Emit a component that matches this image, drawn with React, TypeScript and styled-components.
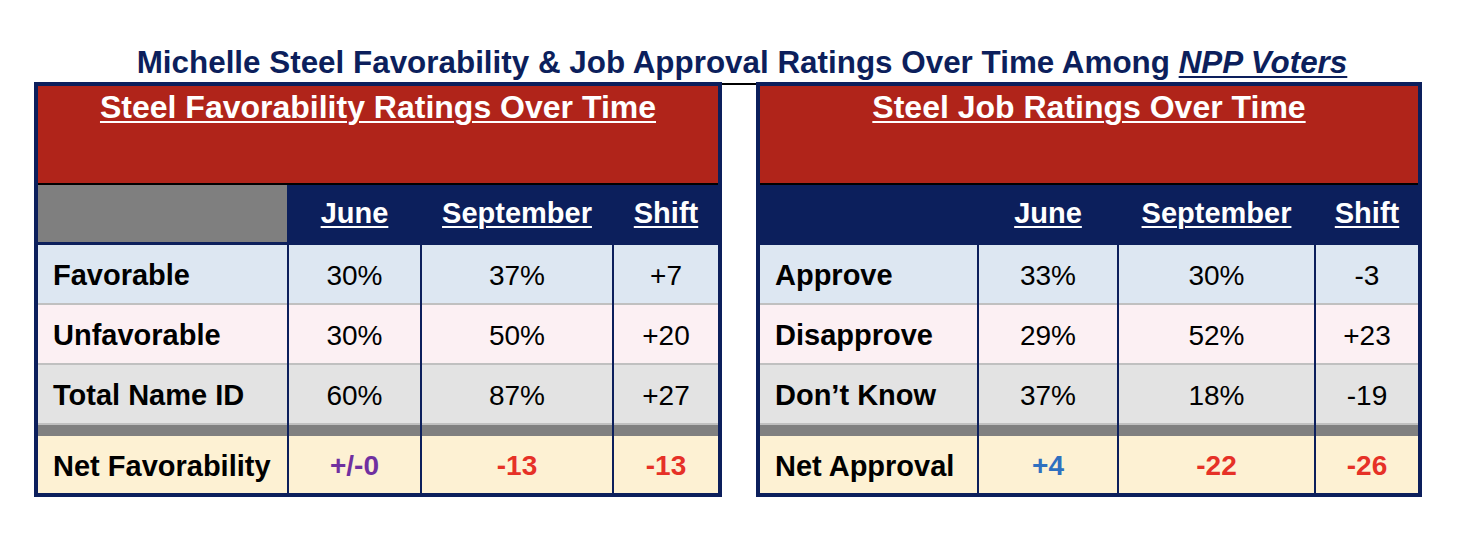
import React from "react";
import styled, { createGlobalStyle } from "styled-components";

const NAVY = "#0c1f5c";

type RowKind = "fav" | "unfav" | "total" | "net";
type Tone = "black" | "purple" | "red" | "blue";

interface TableRow {
  kind: RowKind;
  label: string;
  values: { text: string; tone?: Tone }[];
}

interface TableData {
  title: string;
  columns: string;
  mutedCorner: boolean;
  width: number;
  rows: TableRow[];
}

const rowColors: Record<RowKind, string> = {
  fav: "#dde7f2",
  unfav: "#fcf0f3",
  total: "#e3e3e3",
  net: "#fdf1d3",
};

const toneColors: Record<Tone, string> = {
  black: "#000000",
  purple: "#7030a0",
  red: "#e63127",
  blue: "#2f70c0",
};

const favTable: TableData = {
  title: "Steel Favorability Ratings Over Time",
  columns: "249px 131px 190px 104px",
  mutedCorner: true,
  width: 688,
  rows: [
    { kind: "fav", label: "Favorable", values: [{ text: "30%" }, { text: "37%" }, { text: "+7" }] },
    { kind: "unfav", label: "Unfavorable", values: [{ text: "30%" }, { text: "50%" }, { text: "+20" }] },
    { kind: "total", label: "Total Name ID", values: [{ text: "60%" }, { text: "87%" }, { text: "+27" }] },
    {
      kind: "net",
      label: "Net Favorability",
      values: [
        { text: "+/-0", tone: "purple" },
        { text: "-13", tone: "red" },
        { text: "-13", tone: "red" },
      ],
    },
  ],
};

const jobTable: TableData = {
  title: "Steel Job Ratings Over Time",
  columns: "217px 138px 195px 102px",
  mutedCorner: false,
  width: 666,
  rows: [
    { kind: "fav", label: "Approve", values: [{ text: "33%" }, { text: "30%" }, { text: "-3" }] },
    { kind: "unfav", label: "Disapprove", values: [{ text: "29%" }, { text: "52%" }, { text: "+23" }] },
    { kind: "total", label: "Don\u2019t Know", values: [{ text: "37%" }, { text: "18%" }, { text: "-19" }] },
    {
      kind: "net",
      label: "Net Approval",
      values: [
        { text: "+4", tone: "blue" },
        { text: "-22", tone: "red" },
        { text: "-26", tone: "red" },
      ],
    },
  ],
};

const App: React.FC = () => {
  return (
    <Page>
      <GlobalStyle />
      <Title>
        Michelle Steel Favorability &amp; Job Approval Ratings Over Time Among{" "}
        <TitleEm>NPP Voters</TitleEm>
      </Title>
      <TablesRow>
        <RatingsTable data={favTable} />
        <Gap />
        <RatingsTable data={jobTable} />
      </TablesRow>
    </Page>
  );
};

const RatingsTable: React.FC<{ data: TableData }> = ({ data }) => (
  <Card $width={data.width}>
    <Banner>{data.title}</Banner>
    <Grid $columns={data.columns}>
      <HeadCell $muted={data.mutedCorner} />
      <HeadCell>
        <HeadText>June</HeadText>
      </HeadCell>
      <HeadCell>
        <HeadText>September</HeadText>
      </HeadCell>
      <HeadCell>
        <HeadText>Shift</HeadText>
      </HeadCell>
      {data.rows.map((row) => (
        <React.Fragment key={row.label}>
          {row.kind === "net" &&
            [0, 1, 2, 3].map((i) => <BarCell key={`bar-${i}`} />)}
          <LabelCell $kind={row.kind}>{row.label}</LabelCell>
          {row.values.map((v, i) => (
            <ValueCell
              key={i}
              $kind={row.kind}
              $tone={v.tone ?? "black"}
              $bold={row.kind === "net"}
            >
              {v.text}
            </ValueCell>
          ))}
        </React.Fragment>
      ))}
    </Grid>
  </Card>
);

const GlobalStyle = createGlobalStyle`
  html, body {
    margin: 0;
    padding: 0;
    background: #ffffff;
  }
  body {
    font-family: "Liberation Sans", Arial, Helvetica, sans-serif;
  }
  * {
    box-sizing: border-box;
  }
`;

const Page = styled.div`
  width: 1460px;
  height: 534px;
  padding-top: 45px;
  background: #ffffff;
`;

const Title = styled.div`
  height: 36px;
  line-height: 36px;
  margin-bottom: 1px;
  padding-left: 24px;
  text-align: center;
  font-size: 31.4px;
  font-weight: 700;
  color: ${NAVY};
  white-space: nowrap;
`;

const TitleEm = styled.span`
  font-style: italic;
  text-decoration: underline;
  text-decoration-thickness: 2px;
  text-underline-offset: 3px;
`;

const TablesRow = styled.div`
  display: flex;
  align-items: flex-start;
  padding-left: 34px;
`;

const Gap = styled.div`
  width: 34px;
  margin-top: 1px;
  border-top: 2px solid #000000;
`;

const Card = styled.div<{ $width: number }>`
  width: ${(p) => p.$width}px;
  border: 4px solid ${NAVY};
  background: ${NAVY};
`;

const Banner = styled.div`
  height: 99px;
  padding-top: 3px;
  background: #b0241a;
  border-bottom: 2px solid #000000;
  text-align: center;
  color: #ffffff;
  font-size: 32px;
  font-weight: 700;
  line-height: 36px;
  text-decoration: underline;
  text-decoration-thickness: 2px;
  text-underline-offset: 3px;
`;

const Grid = styled.div<{ $columns: string }>`
  display: grid;
  grid-template-columns: ${(p) => p.$columns};
  column-gap: 2px;
  background: ${NAVY};
`;

const HeadCell = styled.div<{ $muted?: boolean }>`
  height: 60px;
  display: flex;
  align-items: center;
  justify-content: center;
  background: ${(p) => (p.$muted ? "#7f7f7f" : NAVY)};
  border-bottom: 3px solid ${NAVY};
`;

const HeadText = styled.span`
  color: #ffffff;
  font-size: 29px;
  font-weight: 700;
  text-decoration: underline;
  text-decoration-thickness: 2px;
  text-underline-offset: 3px;
`;

const BodyCell = styled.div<{ $kind: RowKind }>`
  height: ${(p) => (p.$kind === "net" ? 57 : 60)}px;
  display: flex;
  align-items: center;
  padding-top: 3px;
  background: ${(p) => rowColors[p.$kind]};
  border-bottom: ${(p) => (p.$kind === "net" ? "none" : "2px solid #c0c0c0")};
  color: #000000;
  white-space: nowrap;
`;

const LabelCell = styled(BodyCell)`
  padding-left: 15px;
  font-size: 29px;
  font-weight: 700;
`;

const ValueCell = styled(BodyCell)<{ $tone: Tone; $bold: boolean }>`
  justify-content: center;
  font-size: 28px;
  font-weight: ${(p) => (p.$bold ? 700 : 400)};
  color: ${(p) => toneColors[p.$tone]};
`;

const BarCell = styled.div`
  height: 11px;
  background: #808080;
`;

export default App;
